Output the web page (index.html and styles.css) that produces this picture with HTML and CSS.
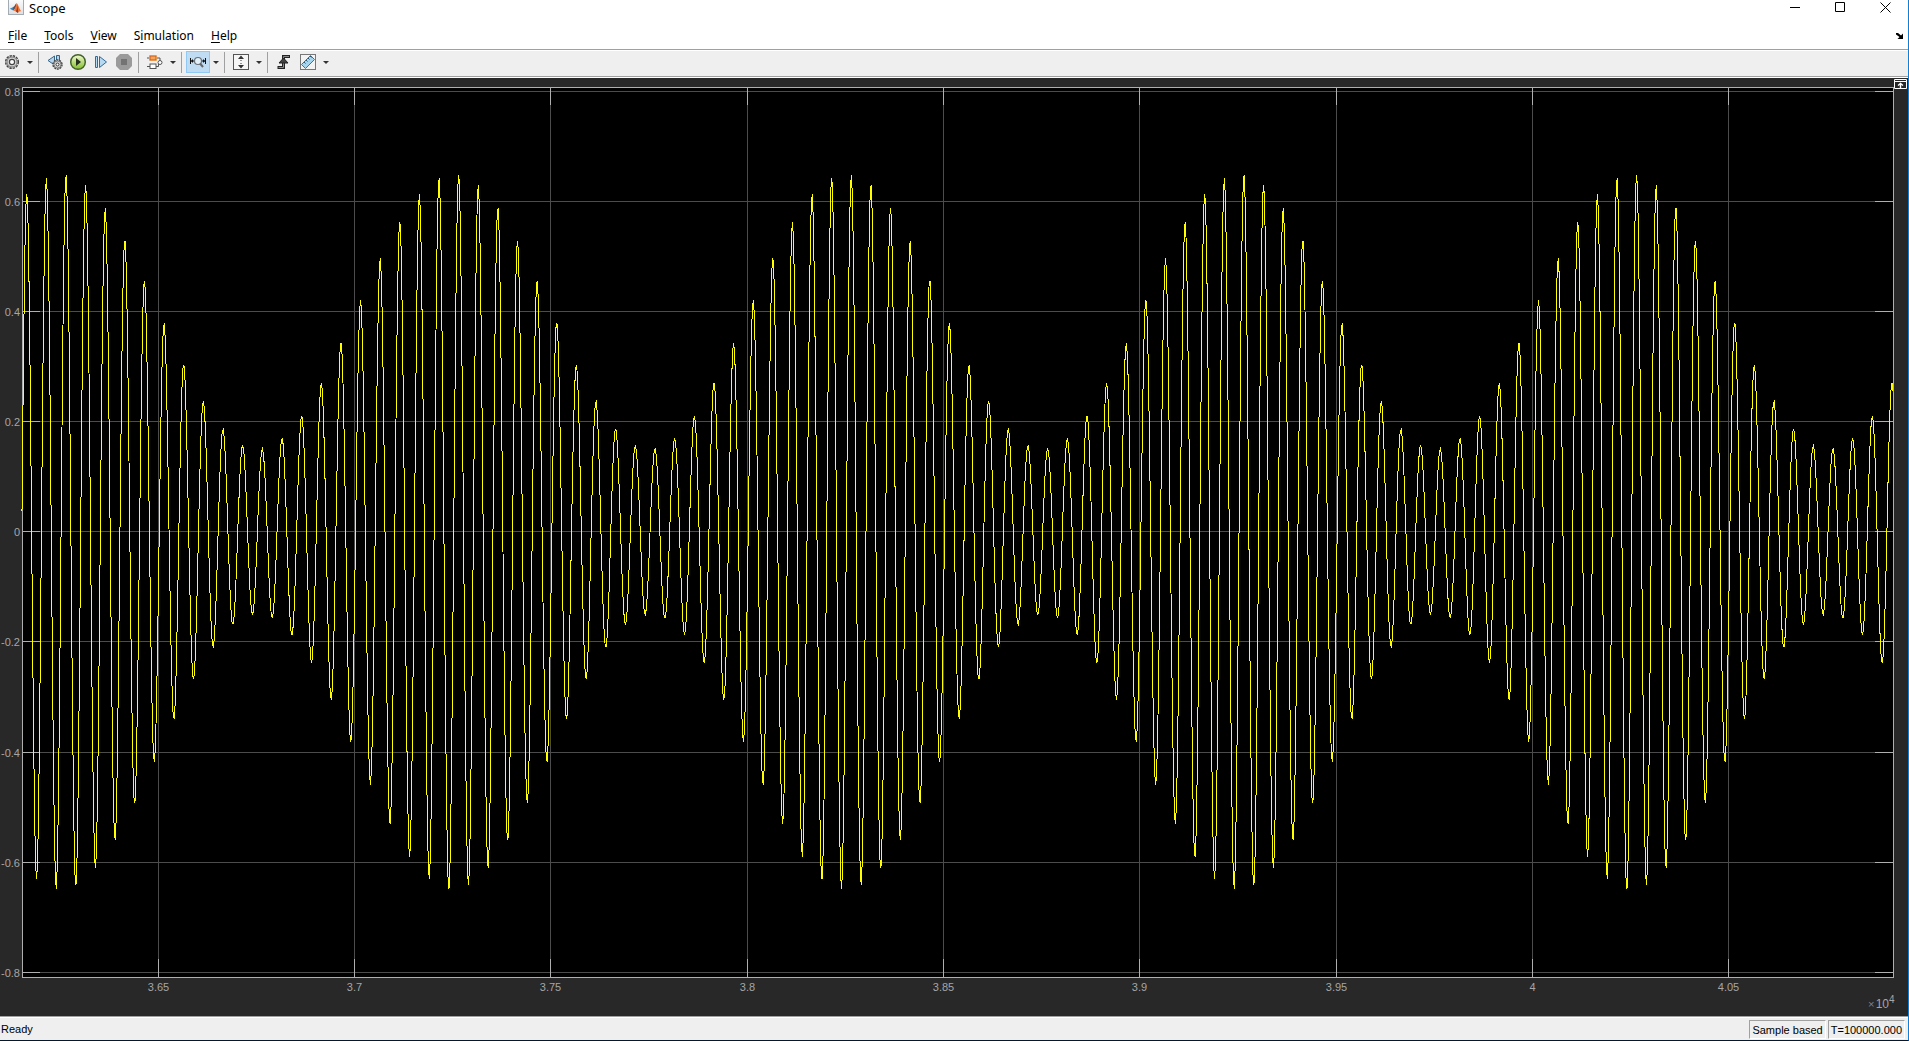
FILE: index.html
```html
<!DOCTYPE html>
<html lang="en">
<head>
<meta charset="utf-8">
<title>Scope</title>
<link rel="stylesheet" href="styles.css">
</head>
<body>
<div class="window">
  <header class="titlebar">
    <svg class="logo" width="16" height="16" viewBox="0 0 16 16" aria-hidden="true">
      <defs><linearGradient id="tile" x2="0" y2="1"><stop stop-color="#fff"/><stop offset="1" stop-color="#dcdfe3"/></linearGradient></defs>
      <rect x="0.5" y="-2" width="15" height="16.500" fill="url(#tile)" stroke="#a3abb3"/>
      <g transform="translate(1 1.500) scale(.85)">
        <path d="M1 8.500 5 6.500 7 7.500 5 10.500z" fill="#3c86b8"/>
        <path d="M5 6.500C7 5.500 7 3 9 2L8 7 5 10.500z" fill="#6b4a50"/>
        <path d="M9 2c2 1 3 7 6 10-2-1-3 0-4.500 1.500C9.500 13 8 11 5 10.500 7.500 9 8 5 9 2z" fill="#e8753a"/>
        <path d="M9 2c1 2 1 7-1 9.500L10.500 13.500C11 9 10 5 9 2z" fill="#a5341f"/>
      </g>
    </svg>
    <h1 class="title">Scope</h1>
    <div class="controls">
      <button class="control" aria-label="Minimize"><svg width="11" height="11" viewBox="0 0 11 11"><path d="M0 5.500H10" stroke="#000"/></svg></button>
      <button class="control" aria-label="Maximize"><svg width="11" height="11" viewBox="0 0 11 11"><path d="M.5.5h9v9h-9z" stroke="#000" fill="none"/></svg></button>
      <button class="control" aria-label="Close"><svg width="11" height="11" viewBox="0 0 11 11"><path d="M.5.5l10 10M10.500.5l-10 10" stroke="#000"/></svg></button>
    </div>
  </header>

  <nav class="menubar">
    <button class="menu"><u>F</u>ile</button>
    <button class="menu"><u>T</u>ools</button>
    <button class="menu"><u>V</u>iew</button>
    <button class="menu">S<u>i</u>mulation</button>
    <button class="menu"><u>H</u>elp</button>
    <button class="dock" aria-label="Dock window"><svg width="7" height="6" viewBox="0 0 7 6"><path d="M0 0h2l3 2.500L7 .5V6H1.500L3.500 4 0 1.500z" fill="#000"/></svg></button>
  </nav>

  <div class="toolbar" role="toolbar" aria-label="Scope tools">
    <button class="tool" aria-label="Configuration properties">
      <svg width="16" height="16" viewBox="0 0 16 16"><circle cx="8" cy="8" r="6.300" fill="none" stroke="#444" stroke-width="1.500" stroke-dasharray="2.400 .9"/><circle cx="8" cy="8" r="5" fill="#d8d8d8" stroke="#777"/><circle cx="8" cy="8" r="2.600" fill="#fff" stroke="#444" stroke-width="1.200"/></svg>
    </button>
    <button class="arrow" aria-label="More configuration"></button>
    <span class="divider"></span>
    <button class="tool run" aria-label="Step back options">
      <svg width="16" height="16" viewBox="0 0 16 16"><path d="M7.500 2v9L1 6.500z" fill="#b5d5ee" stroke="#356487"/><path d="M9.500 1.500h3v6h-3z" fill="#b5d5ee" stroke="#356487"/><circle cx="10.500" cy="10.500" r="4.500" fill="#ddd" stroke="#444" stroke-width="1.400" stroke-dasharray="2 .8"/><circle cx="10.500" cy="10.500" r="3.500" fill="#ddd" stroke="#777"/><circle cx="10.500" cy="10.500" r="1.500" fill="#fff" stroke="#333"/></svg>
    </button>
    <button class="tool run" aria-label="Run">
      <svg width="18" height="18" viewBox="0 0 18 18"><defs><linearGradient id="go" x2="0" y2="1"><stop stop-color="#f2fbd0"/><stop offset="1" stop-color="#83bd2b"/></linearGradient></defs><circle cx="9" cy="9" r="7.300" fill="url(#go)" stroke="#44632a" stroke-width="1.500"/><path d="M7 5l5 4-5 4z" fill="#26301f"/></svg>
    </button>
    <button class="tool run" aria-label="Step forward">
      <svg width="16" height="16" viewBox="0 0 16 16"><path d="M2.500 2.500h2v11h-2zM6.500 2.500l7 5.500-7 5.500z" fill="#b8d9f2" stroke="#356a94"/></svg>
    </button>
    <button class="tool run" aria-label="Stop">
      <svg width="18" height="18" viewBox="0 0 18 18"><path d="M5 1h8l4 4v8l-4 4H5l-4-4V5z" fill="#9b9b9b"/><path d="M6 6h6v6H6z" fill="#737373"/></svg>
    </button>
    <span class="divider"></span>
    <button class="tool" aria-label="Highlight block">
      <svg width="16" height="16" viewBox="0 0 16 16"><path d="M0 4h3M9 4h4v3M0 12.500h3M9 12.500h2.500V10" fill="none" stroke="#555"/><rect x="2" y="1" width="8" height="6" fill="#ffd08a"/><rect x="3" y="2" width="6" height="4" fill="#f4a55a" stroke="#cc5a14"/><rect x="3" y="10" width="6" height="4.500" fill="#fff" stroke="#555"/><circle cx="13" cy="8.500" r="2" fill="#fff" stroke="#555"/></svg>
    </button>
    <button class="arrow" aria-label="More highlight options"></button>
    <span class="divider"></span>
    <button class="tool selected" aria-label="Zoom X" aria-pressed="true">
      <svg width="16" height="16" viewBox="0 0 16 16"><path d="M.5 4v6M15.500 4v6M1 7h3M12 7h3" stroke="#111"/><path d="M1 7l2-2v4zM15 7l-2-2v4z" fill="#111"/><circle cx="8" cy="7" r="3.500" fill="#e4f0f8" stroke="#667078" stroke-width="1.200"/><path d="M10 9.500l3 3.500" stroke="#666" stroke-width="2"/></svg>
    </button>
    <button class="arrow" aria-label="More zoom options"></button>
    <span class="divider"></span>
    <button class="tool" aria-label="Scale axes">
      <svg width="16" height="16" viewBox="0 0 16 16"><rect x=".5" y=".5" width="15" height="15" fill="#f6f6f6" stroke="#555"/><path d="M8 1.500L11 5H5zM8 14.500L11 11H5z" fill="#333"/><path d="M8 4v3M8 9v3" stroke="#333" stroke-dasharray="1 1"/></svg>
    </button>
    <button class="arrow" aria-label="More scaling options"></button>
    <span class="divider"></span>
    <button class="tool" aria-label="Triggers">
      <svg width="16" height="16" viewBox="0 0 16 16"><path d="M1.500 13.500h6V2.500H14" fill="none" stroke="#222" stroke-width="3"/><path d="M2.500 13.500h5V2.500h5.500" fill="none" stroke="#888"/><path d="M7.500 4l4.500 5H3z" fill="#444" stroke="#222"/></svg>
    </button>
    <button class="tool" aria-label="Cursor measurements">
      <svg width="16" height="16" viewBox="0 0 16 16"><rect x=".5" y=".5" width="15" height="15" fill="#f3f3f3" stroke="#777"/><path d="M10.500 1.500l4 4-9 9-4-4z" fill="#a7d5ee" stroke="#36779d"/><path d="M4 8l1.500 1.500M6 6l1.500 1.500M8 4l1.500 1.500M10 2l1.500 1.500" stroke="#24587a"/></svg>
    </button>
    <button class="arrow" aria-label="More measurements"></button>
  </div>

  <main class="scope">
    <svg id="plot" class="plot" role="img" aria-label="Amplitude-modulated signal against time"></svg>
    <button class="expand" aria-label="Maximize axes"><svg width="13" height="10" viewBox="0 0 13 10"><path d="M.5.5h12v9H.5zM0 2.500h13" fill="none" stroke="#fff"/><path d="M6.500 4v5M4 6.500l2.500-2 2.500 2" fill="none" stroke="#fff" stroke-width="1.400"/></svg></button>
  </main>

  <footer class="statusbar">
    <span class="ready">Ready</span>
    <span class="cell">Sample based</span>
    <span class="cell">T=100000.000</span>
  </footer>
</div>
<script src="plot.js"></script>
</body>
</html>
```
FILE: styles.css
```css
* { box-sizing: border-box; }
body {
  margin: 0;
  background: #fff;
  color: #000;
  font: 12px/16px "Noto Sans", "Open Sans", sans-serif;
}
button {
  margin: 0;
  padding: 0;
  border: 0;
  background: none;
  color: inherit;
  font: inherit;
}
svg { display: block; }
.window {
  display: flex;
  flex-direction: column;
  height: 100vh;
  border-right: 1px solid #0f7fd7;
  border-bottom: 1px solid #06192c;
}
.titlebar {
  display: flex;
  align-items: flex-start;
  height: 24px;
  padding-left: 8px;
}
.title {
  flex: 1;
  margin: 0;
  padding-left: 5px;
  font-size: 13px;
  font-weight: 400;
}
.controls { display: flex; }
.control {
  display: flex;
  justify-content: center;
  width: 45px;
  padding-top: 2px;
}
.menubar {
  display: flex;
  align-items: center;
  gap: 17px;
  height: 25px;
  padding: 0 5px 2px 8px;
}
.menu u { text-underline-offset: 2px; }
.dock { margin-left: auto; }
.toolbar {
  display: flex;
  align-items: center;
  height: 29px;
  border-top: 1px solid #a0a0a0;
  border-bottom: 1px solid #fff;
  box-shadow: inset 0 1px #fff, inset 0 -1px #a0a0a0;
  background: #efefef;
  padding-bottom: 3px;
}
.tool {
  display: flex;
  flex: none;
  align-items: center;
  justify-content: center;
  width: 24px;
  height: 22px;
}
.run { width: 23px; }
.selected {
  background: #c0dcf3;
  border: 1px solid #90c8f6;
}
.arrow {
  width: 11px;
  height: 22px;
  display: flex;
  align-items: center;
  justify-content: center;
}
.arrow::after {
  content: "";
  border: 3px solid transparent;
  border-top-color: #333;
  border-bottom: 0;
}
.divider {
  width: 1px;
  height: 21px;
  margin: 1px 4px 0 3px;
  background: #a0a0a0;
}
.scope {
  position: relative;
  flex: 1;
  min-height: 0;
  background: #282828;
}
.plot {
  width: 100%;
  height: 100%;
  font: 11px "Liberation Sans", Arial, sans-serif;
}
.plot text { fill: #a6a6a6; }
.plot .times { fill: #808080; }
.plot .exponent { font-size: 12px; }
.plot .power { font-size: 10px; }
.frame { fill: #000; stroke: #afafaf; shape-rendering: crispEdges; }
.grid { stroke: #4c4c4c; shape-rendering: crispEdges; }
.tick { stroke: #afafaf; shape-rendering: crispEdges; }
.signal { fill: none; stroke: #ff0; shape-rendering: crispEdges; }
.expand {
  position: absolute;
  top: 1px;
  right: 1px;
}
.statusbar {
  display: flex;
  align-items: center;
  height: 24px;
  padding: 2px 3px 1px 1px;
  border-top: 1px solid #a0a0a0;
  box-shadow: inset 0 1px #fff;
  background: #efefef;
  font: 11px/14px "Liberation Sans", Arial, sans-serif;
}
.ready { flex: 1; }
.cell {
  height: 19px;
  padding: 2px 2px 0;
  margin-left: 2px;
  border: 1px solid #fff;
  border-top-color: #a0a0a0;
  border-left-color: #a0a0a0;
}
```
FILE: plot.js
```js
const NS = 'http://www.w3.org/2000/svg';
const plot = document.getElementById('plot');
const pad = { left: 22, right: 15, top: 9, bottom: 39 };
const time = { min: 36153, max: 40918 };
const value = { min: -0.8085, max: 0.8075 };

function add(name, attrs, text) {
  const el = document.createElementNS(NS, name);
  for (const key in attrs) el.setAttribute(key, attrs[key]);
  if (text) el.textContent = text;
  plot.appendChild(el);
  return el;
}

function signal(t) {
  const envelope = 0.4 + 0.25 * Math.cos(2 * Math.PI * (t - 37252) / 1000);
  return envelope * Math.cos(2 * Math.PI * (t - 37265) / 50);
}

function draw() {
  const box = plot.getBoundingClientRect();
  const left = pad.left, top = pad.top;
  const right = Math.round(box.width) - pad.right;
  const bottom = Math.round(box.height) - pad.bottom;
  const px = t => left + (t - time.min) / (time.max - time.min) * (right - left);
  const py = v => top + (value.max - v) / (value.max - value.min) * (bottom - top);
  const line = (cls, x1, y1, x2, y2) => add('line', { class: cls, x1, y1, x2, y2 });

  plot.replaceChildren();
  add('rect', { class: 'frame', x: left + 0.5, y: top + 0.5, width: right - left, height: bottom - top });

  const xs = [], ys = [];
  for (let t = 36500; t < time.max; t += 500) xs.push([t, Math.floor(px(t)) + 0.5]);
  for (let i = -4; i <= 4; i++) ys.push([i / 5, Math.floor(py(i / 5)) + 0.5]);

  for (const [, x] of xs) line('grid', x, top + 1, x, bottom);
  for (const [, y] of ys) line('grid', left + 1, y, right, y);
  for (const [t, x] of xs) {
    line('tick', x, top, x, top + 18);
    line('tick', x, bottom - 18, x, bottom);
    add('text', { x, y: bottom + 14, 'text-anchor': 'middle' }, String(t / 10000));
  }
  for (const [v, y] of ys) {
    line('tick', left, y, left + 18, y);
    line('tick', right - 18, y, right, y);
    add('text', { x: left - 2, y: y + 4, 'text-anchor': 'end' }, String(v));
  }

  const points = [];
  for (let t = time.min; t <= time.max; t += 2.5) {
    points.push(px(t).toFixed(2) + ',' + py(signal(t)).toFixed(2));
  }
  add('polyline', { class: 'signal', points: points.join(' ') });

  add('text', { class: 'times', x: right - 25, y: bottom + 31 }, '×');
  add('text', { class: 'exponent', x: right - 4, y: bottom + 31, 'text-anchor': 'end' }, '10');
  add('text', { class: 'power', x: right - 4, y: bottom + 26 }, '4');
}

draw();
window.addEventListener('resize', draw);
```
